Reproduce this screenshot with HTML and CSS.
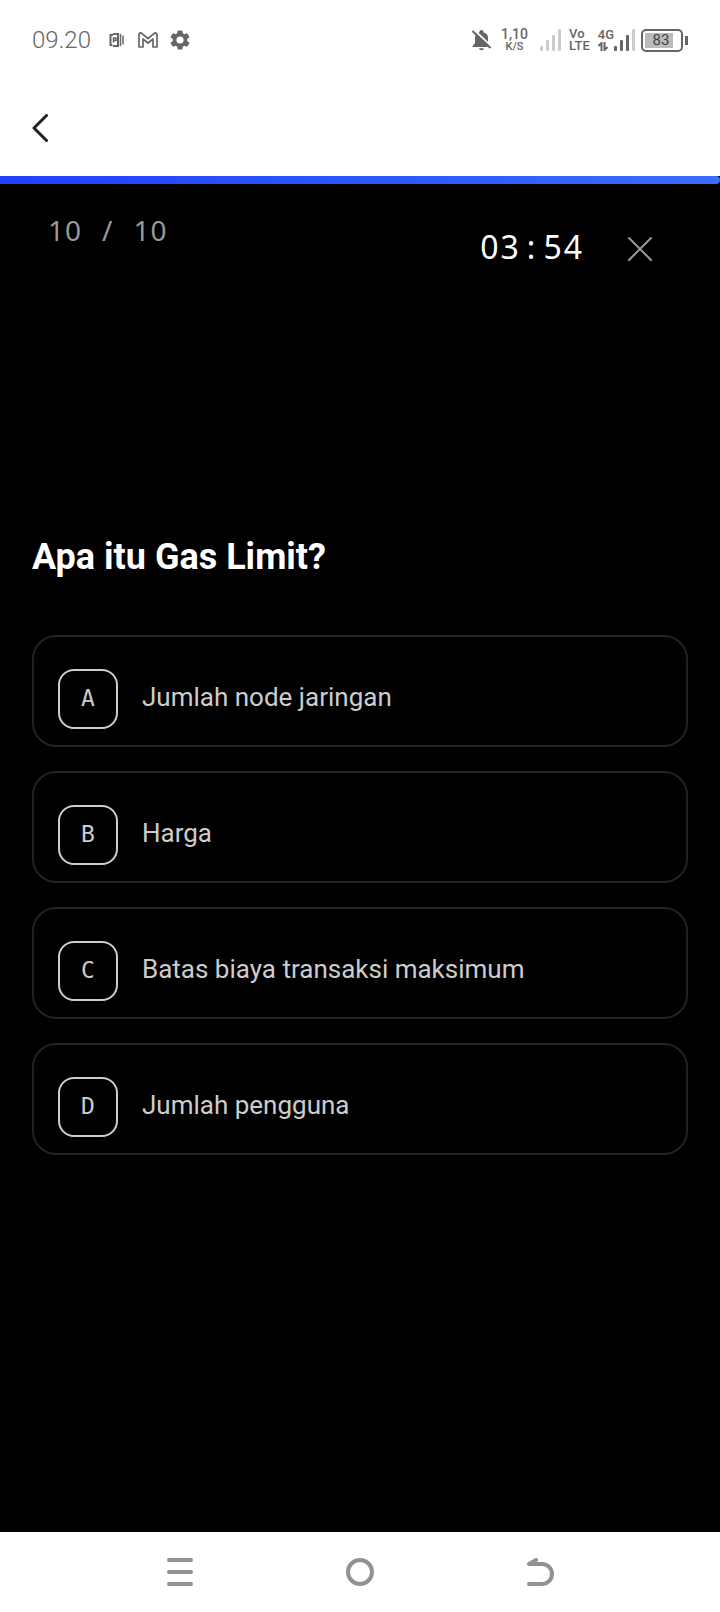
FILE: index.html
```html
<!DOCTYPE html>
<html lang="id">
<head>
    <meta charset="UTF-8">
    <meta name="viewport" content="width=device-width, initial-scale=1.0">
    <title>Kuis</title>
    <link rel="stylesheet" href="styles.css">
</head>
<body>
    <div class="status-bar">
        <div class="status-left">
            <span class="clock">09.20</span>
            <svg class="icon-app" width="16" height="16" viewBox="0 0 16 16" fill="none" stroke="#666">
                <path d="M3.500 13H1.500V3H4M4 2h5v12H4" stroke-width="2"/>
                <path d="M4.500 10.500V6h2.500v2.500H5" stroke-width="1.500"/>
                <path d="M11.500 2v12" stroke-width="1.500"/>
                <path d="M14 3.500v9" stroke-width="1.500"/>
            </svg>
            <svg class="icon-mail" width="20" height="16" viewBox="0 0 20 16" fill="none" stroke="#666" stroke-width="1.700" stroke-linejoin="round">
                <path d="M1 3Q1 .8 3 .8L10 6.500 17 .8Q19 .8 19 3V15H15V7L10 11 5 7V15H1Z"/>
            </svg>
            <svg class="icon-gear" width="20" height="20" viewBox="2 2 20 20" fill="#666">
                <path d="M19.140 12.940c.040-.3.060-.610.060-.940s-.020-.640-.070-.940l2.030-1.580a.5.5 0 0 0 .120-.610l-1.920-3.320a.5.5 0 0 0-.590-.220l-2.390.960a7 7 0 0 0-1.620-.940l-.360-2.540A.5.5 0 0 0 13.920 2.400h-3.840a.5.5 0 0 0-.470.410l-.360 2.540c-.590.240-1.130.570-1.620.940l-2.390-.960a.5.5 0 0 0-.590.220L2.740 8.870a.5.5 0 0 0 .120.610l2.030 1.580a6 6 0 0 0 0 1.880l-2.030 1.580a.5.5 0 0 0-.120.610l1.920 3.320c.120.220.370.290.590.220l2.390-.960c.5.380 1.030.700 1.620.940l.360 2.540c.050.240.240.410.480.410h3.840c.240 0 .440-.170.470-.410l.360-2.540a7 7 0 0 0 1.620-.940l2.390.960c.220.080.470 0 .590-.220l1.920-3.320a.5.5 0 0 0-.120-.610zM12 15.600a3.600 3.600 0 1 1 0-7.200 3.600 3.600 0 0 1 0 7.200z"/>
            </svg>
        </div>
        <div class="status-right">
            <svg class="icon-bell" width="20" height="22" viewBox="0 0 20 22">
                <path d="M3 9a5.500 5.500 0 0 1 4.300-5.600Q7.500 1 9.500 1t2.200 2.400A5.500 5.500 0 0 1 16 9v5l2.500 3v1H.5v-1L3 14z" fill="#666"/>
                <path d="M7 19.300h5a2.500 2 0 0 1-5 0" fill="#666"/>
                <path d="M1.500 .5l18 17" stroke="#fff" stroke-width="2"/>
                <path d="M.5 2l18 17" stroke="#666" stroke-width="2"/>
            </svg>
            <div class="stack speed"><span>1,10</span><small>K/S</small></div>
            <svg class="icon-sim" width="21" height="22" viewBox="0 0 21 22" fill="#ccc">
                <rect x="0" y="17" width="3" height="5" rx="1"/>
                <rect x="6" y="11" width="3" height="11" rx="1"/>
                <rect x="12" y="6" width="3" height="16" rx="1"/>
                <rect x="18" y="0" width="3" height="22" rx="1"/>
            </svg>
            <div class="stack lte"><span>Vo</span><span>LTE</span></div>
            <div class="stack network">
                <span>4G</span>
                <svg width="10" height="9" viewBox="0 0 10 9" fill="none" stroke="#666" stroke-width="2">
                    <path d="M3.500 9V1L.5 4M6.500 0v8l3-3"/>
                </svg>
            </div>
            <svg class="icon-signal" width="21" height="22" viewBox="0 0 21 22" fill="#666">
                <rect x="0" y="17" width="3" height="5" rx="1"/>
                <rect x="6" y="11" width="3" height="11" rx="1"/>
                <rect x="12" y="6" width="3" height="16" rx="1"/>
                <rect x="18" y="0" width="3" height="22" rx="1" fill="#ccc"/>
            </svg>
            <div class="battery"><span>83</span></div>
        </div>
    </div>

    <header class="app-bar">
        <button type="button" class="back-btn" aria-label="Kembali">
            <svg width="16" height="28" viewBox="0 0 16 28" fill="none" stroke="#222" stroke-width="3" stroke-linecap="round" stroke-linejoin="round">
                <path d="M14.500 1.500L2 14l12.500 12.500"/>
            </svg>
        </button>
    </header>

    <main class="quiz">
        <div class="progress"><div class="progress-fill"></div></div>

        <div class="quiz-top">
            <div class="counter"><span>10</span><span>/</span><span>10</span></div>
            <div class="timer"><span>03</span><span>:</span><span>54</span></div>
            <button type="button" class="close-btn" aria-label="Tutup">
                <svg width="26" height="26" viewBox="0 0 26 26" stroke="#999" stroke-width="2" stroke-linecap="round">
                    <path d="M2 2l22 22M24 2L2 24"/>
                </svg>
            </button>
        </div>

        <section class="question">
            <h1>Apa itu Gas Limit?</h1>
            <div class="options">
                <button type="button" class="option"><span class="letter">A</span><span class="answer">Jumlah node jaringan</span></button>
                <button type="button" class="option"><span class="letter">B</span><span class="answer">Harga</span></button>
                <button type="button" class="option"><span class="letter">C</span><span class="answer">Batas biaya transaksi maksimum</span></button>
                <button type="button" class="option"><span class="letter">D</span><span class="answer">Jumlah pengguna</span></button>
            </div>
        </section>
    </main>

    <nav class="nav-bar">
        <button type="button" aria-label="Menu">
            <svg width="28" height="28" viewBox="0 0 28 28" stroke="#929292" stroke-width="4" stroke-linecap="round">
                <path d="M3 2h22M3 14h22M3 26h22"/>
            </svg>
        </button>
        <button type="button" aria-label="Beranda">
            <svg width="28" height="28" viewBox="0 0 28 28" fill="none" stroke="#929292" stroke-width="4">
                <circle cx="14" cy="14" r="12"/>
            </svg>
        </button>
        <button type="button" aria-label="Kembali">
            <svg width="28" height="28" viewBox="0 0 28 28" fill="none" stroke="#929292" stroke-width="4" stroke-linecap="round" stroke-linejoin="round">
                <path d="M10 2L3 6h13a10 10 0 0 1 0 20H3"/>
            </svg>
        </button>
    </nav>
</body>
</html>
```

FILE: styles.css
```css
* {
    box-sizing: border-box;
}
body {
    margin: 0;
    min-height: 100vh;
    display: flex;
    flex-direction: column;
    background: #fff;
    font-family: Roboto, sans-serif;
}
button {
    padding: 0;
    border: none;
    background: none;
    font-family: inherit;
    cursor: pointer;
}
svg {
    display: block;
    flex: none;
}

/* status bar */
.status-bar {
    height: 80px;
    padding: 0 32px;
    display: flex;
    justify-content: space-between;
    align-items: center;
    color: #666;
}
.status-left,
.status-right {
    display: flex;
    align-items: center;
}
.clock {
    font-size: 24px;
    font-weight: 300;
    margin-right: 18px;
}
.icon-mail {
    margin: 0 12px 0 13px;
}
.stack {
    display: flex;
    flex-direction: column;
    align-items: center;
    font-size: 13px;
    line-height: 12px;
    font-weight: 500;
}
.speed {
    margin: 0 12px 0 9px;
    font-size: 14px;
    line-height: 13px;
}
.speed small {
    font-size: 11px;
    line-height: 12px;
}
.lte {
    margin: 0 8px;
    align-items: flex-start;
}
.network {
    align-items: flex-start;
    gap: 1px;
}
.icon-signal {
    margin-right: 6px;
}
.battery {
    position: relative;
    width: 42px;
    height: 23px;
    margin-right: 5px;
    padding: 2px;
    border: 2px solid #666;
    border-radius: 5px;
}
.battery span {
    display: block;
    width: 28px;
    padding-left: 4px;
    background: #bbb;
    color: #444;
    font-size: 15px;
    line-height: 15px;
    text-align: center;
}
.battery::after {
    content: "";
    position: absolute;
    top: 5px;
    right: -7px;
    width: 3px;
    height: 9px;
    background: #666;
}

/* app bar */
.app-bar {
    height: 96px;
    padding: 0 32px;
    display: flex;
    align-items: center;
}

/* quiz */
.quiz {
    flex: 1;
    background: #000;
    color: #fff;
}
.progress {
    height: 8px;
}
.progress-fill {
    height: 100%;
    border-radius: 0 4px 4px 0;
    background: linear-gradient(90deg, #1f41ff, #3b6bff);
}
.quiz-top {
    padding: 30px 67px 0 48px;
    display: flex;
    align-items: flex-start;
    font-family: "Noto Sans", sans-serif;
}
.counter {
    flex: 1;
    display: flex;
    gap: 20px;
    color: #999;
    font-size: 28px;
    line-height: 32px;
    letter-spacing: 1px;
}
.timer {
    display: flex;
    gap: 6px;
    margin-right: 43px;
    font-size: 32px;
    line-height: 66px;
    letter-spacing: 2px;
}
.close-btn {
    margin-top: 22px;
}
.question {
    padding: 255px 32px 64px;
}
.question h1 {
    margin: 0 0 56px;
    font-size: 36px;
    line-height: 44px;
    font-weight: 700;
}
.options {
    display: flex;
    flex-direction: column;
    gap: 24px;
}
.option {
    display: flex;
    align-items: center;
    gap: 24px;
    padding: 32px 24px 16px;
    border: 2px solid #222;
    border-radius: 24px;
    color: #ccc;
    font-size: 26px;
    line-height: 32px;
    text-align: left;
}
.letter {
    flex: none;
    width: 60px;
    height: 60px;
    border: 2px solid #ccc;
    border-radius: 16px;
    font-family: "DejaVu Sans Mono", monospace;
    font-size: 23px;
    line-height: 54px;
    text-align: center;
}
.answer {
    padding-bottom: 4px;
}

/* system navigation */
.nav-bar {
    height: 80px;
    padding: 0 90px;
    display: flex;
    align-items: center;
}
.nav-bar button {
    flex: 1;
    display: flex;
    justify-content: center;
}
```
